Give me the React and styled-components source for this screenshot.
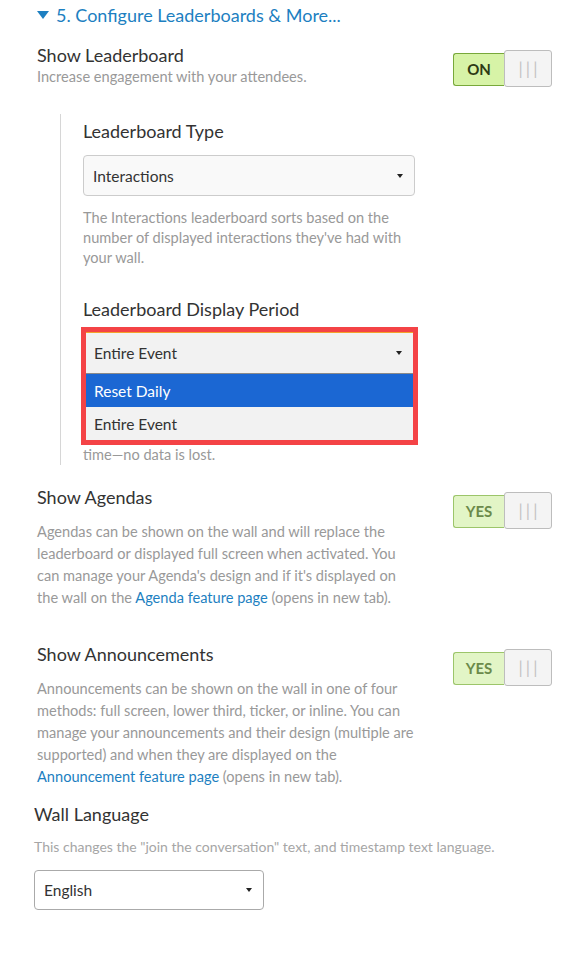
import styled, { createGlobalStyle } from "styled-components";

const GlobalStyle = createGlobalStyle`
  html, body {
    margin: 0;
    padding: 0;
    background: #ffffff;
  }
  body {
    font-family: Lato, "Open Sans", "Liberation Sans", sans-serif;
    color: #333333;
  }
`;

const StyledPage = styled.div`
  width: 581px;
  padding: 0 29px 40px 37px;
  box-sizing: border-box;
`;

const StyledHeader = styled.div`
  display: flex;
  align-items: center;
  gap: 7px;
  height: 30px;
  font-size: 18px;
  color: #1d7fc1;
`;

const StyledCaretDown = styled.span`
  width: 0;
  height: 0;
  border-left: 6.5px solid transparent;
  border-right: 6.5px solid transparent;
  border-top: 8px solid #1d7fc1;
`;

const StyledSetting = styled.section`
  display: flex;
  justify-content: space-between;
  align-items: flex-start;
  margin-top: ${(props) => props.$top}px;
`;

const StyledSettingText = styled.div`
  display: flex;
  flex-direction: column;
`;

const StyledTitle = styled.h3`
  margin: 0;
  font-size: 18px;
  font-weight: normal;
  line-height: 24px;
  color: #333333;
`;

const StyledDescription = styled.p`
  margin: ${(props) => props.$top || 0}px 0 0;
  width: ${(props) => props.$width || "auto"};
  font-size: ${(props) => props.$size || 14.6}px;
  line-height: ${(props) => props.$lineHeight || 20}px;
  color: ${(props) => props.$color || "#999999"};
`;

const StyledLink = styled.a`
  color: #1d7fc1;
  text-decoration: none;
`;

const StyledToggle = styled.div`
  display: flex;
  align-items: center;
  margin-top: 7px;
`;

const StyledToggleOn = styled.div`
  width: 51px;
  height: 33px;
  box-sizing: border-box;
  display: flex;
  align-items: center;
  justify-content: center;
  border: 1px solid ${(props) => (props.$muted ? "#9cc56a" : "#78a83a")};
  border-right: none;
  border-radius: 3px 0 0 3px;
  background: ${(props) => (props.$muted ? "#e2f5c6" : "#d7f3a7")};
  color: ${(props) => (props.$muted ? "#6b8a4a" : "#2d3a14")};
  font-size: 15px;
  font-weight: bold;
  margin-top: 1px;
`;

const StyledToggleKnob = styled.div`
  width: 48px;
  height: 37px;
  box-sizing: border-box;
  display: flex;
  align-items: center;
  justify-content: center;
  border: 1px solid #bdbdbd;
  border-radius: 3px;
  background: #f4f4f4;
  color: #c4c4c4;
  font-size: 17px;
  letter-spacing: 3px;
  padding-left: 3px;
`;

const StyledIndented = styled.div`
  margin: 27px 0 0 23px;
  padding: 5px 0 0 22px;
  border-left: 1px solid #d6d6d6;
`;

const StyledLabel = styled.div`
  font-size: 18px;
  line-height: 24px;
  color: #333333;
  margin-top: ${(props) => props.$top || 0}px;
`;

const StyledSelect = styled.div`
  display: flex;
  align-items: center;
  justify-content: space-between;
  box-sizing: border-box;
  width: ${(props) => props.$width}px;
  height: ${(props) => props.$height || 41}px;
  margin-top: ${(props) => props.$top || 0}px;
  padding: 0 10px 0 9px;
  border: 1px solid ${(props) => props.$border || "#cccccc"};
  border-radius: 4px;
  background: ${(props) => props.$bg || "#f9f9f9"};
  font-size: 15.5px;
  color: #333333;
`;

const StyledSelectCaret = styled.span`
  width: 0;
  height: 0;
  border-left: 3px solid transparent;
  border-right: 3px solid transparent;
  border-top: 4px solid #222222;
  margin-right: 1px;
`;

const StyledHighlight = styled.div`
  margin: 6px 0 0 -2px;
  width: 337px;
  box-sizing: border-box;
  border: 5px solid #f44346;
  background: #f2f2f2;
`;

const StyledOpenSelect = styled.div`
  display: flex;
  align-items: center;
  justify-content: space-between;
  height: 42px;
  box-sizing: border-box;
  padding: 0 10px 0 8px;
  border-top: 1px solid #f3a32b;
  border-bottom: 1px solid #8a8a8a;
  font-size: 15.5px;
  color: #333333;
`;

const StyledOption = styled.div`
  height: 33px;
  display: flex;
  align-items: center;
  padding-left: 8px;
  font-size: 15.5px;
  background: ${(props) => (props.$active ? "#1b67d3" : "#f2f2f2")};
  color: ${(props) => (props.$active ? "#ffffff" : "#333333")};
`;

const StyledLanguage = styled.div`
  margin: 14px 0 0 -3px;
`;

function Toggle({ label, muted }) {
  return (
    <StyledToggle>
      <StyledToggleOn $muted={muted}>{label}</StyledToggleOn>
      <StyledToggleKnob>|||</StyledToggleKnob>
    </StyledToggle>
  );
}

export default function App() {
  return (
    <StyledPage>
      <GlobalStyle />
      <StyledHeader>
        <StyledCaretDown />
        5. Configure Leaderboards &amp; More...
      </StyledHeader>

      <StyledSetting $top={13}>
        <StyledSettingText>
          <StyledTitle>Show Leaderboard</StyledTitle>
          <StyledDescription>Increase engagement with your attendees.</StyledDescription>
        </StyledSettingText>
        <Toggle label="ON" />
      </StyledSetting>

      <StyledIndented>
        <StyledLabel>Leaderboard Type</StyledLabel>
        <StyledSelect $width={332} $top={12}>
          Interactions
          <StyledSelectCaret />
        </StyledSelect>
        <StyledDescription $top={12} $width="332px">
          The Interactions leaderboard sorts based on the number of displayed
          interactions they've had with your wall.
        </StyledDescription>

        <StyledLabel $top={29}>Leaderboard Display Period</StyledLabel>
        <StyledHighlight>
          <StyledOpenSelect>
            Entire Event
            <StyledSelectCaret />
          </StyledOpenSelect>
          <StyledOption $active>Reset Daily</StyledOption>
          <StyledOption>Entire Event</StyledOption>
        </StyledHighlight>
        <StyledDescription>time—no data is lost.</StyledDescription>
      </StyledIndented>

      <StyledSetting $top={20}>
        <StyledSettingText>
          <StyledTitle>Show Agendas</StyledTitle>
          <StyledDescription $top={12} $lineHeight={22} $width="380px">
            Agendas can be shown on the wall and will replace the leaderboard
            or displayed full screen when activated. You can manage your
            Agenda's design and if it's displayed on the wall on the{" "}
            <StyledLink href="#">Agenda feature page</StyledLink> (opens in new
            tab).
          </StyledDescription>
        </StyledSettingText>
        <Toggle label="YES" muted />
      </StyledSetting>

      <StyledSetting $top={33}>
        <StyledSettingText>
          <StyledTitle>Show Announcements</StyledTitle>
          <StyledDescription $top={12} $lineHeight={22} $width="380px">
            Announcements can be shown on the wall in one of four methods: full
            screen, lower third, ticker, or inline. You can manage your
            announcements and their design (multiple are supported) and when
            they are displayed on the{" "}
            <StyledLink href="#">Announcement feature page</StyledLink> (opens
            in new tab).
          </StyledDescription>
        </StyledSettingText>
        <Toggle label="YES" muted />
      </StyledSetting>

      <StyledLanguage>
        <StyledTitle>Wall Language</StyledTitle>
        <StyledDescription $top={11} $size={14} $color="#a6a6a6">
          This changes the "join the conversation" text, and timestamp text
          language.
        </StyledDescription>
        <StyledSelect $width={230} $height={40} $top={13} $bg="#ffffff" $border="#aaaaaa">
          English
          <StyledSelectCaret />
        </StyledSelect>
      </StyledLanguage>
    </StyledPage>
  );
}
